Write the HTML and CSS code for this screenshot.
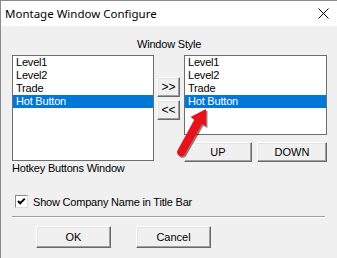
FILE: index.html
```html
<!DOCTYPE html>
<html lang="en">
<head>
    <meta charset="UTF-8">
    <title>Montage Window Configure</title>
    <link rel="stylesheet" href="styles.css">
</head>
<body>
    <div class="window">
        <div class="titlebar">
            <span class="title">Montage Window Configure</span>
            <svg class="close" width="11" height="11" viewBox="0 0 11 11"><path d="M0.5 0.5L10.5 10.5M10.5 0.5L0.5 10.5" stroke="#000" stroke-width="1" fill="none"/></svg>
        </div>
        <div class="content">
            <div class="style-label">Window Style</div>
            <div class="lists">
                <div class="left-col">
                    <ul class="listbox tall">
                        <li>Level1</li>
                        <li>Level2</li>
                        <li>Trade</li>
                        <li class="sel">Hot Button</li>
                    </ul>
                    <div class="caption">Hotkey Buttons Window</div>
                </div>
                <div class="move-col">
                    <button class="btn arrow">&gt;&gt;</button>
                    <button class="btn arrow">&lt;&lt;</button>
                </div>
                <div class="right-col">
                    <ul class="listbox short">
                        <li>Level1</li>
                        <li>Level2</li>
                        <li>Trade</li>
                        <li class="sel">Hot Button</li>
                    </ul>
                    <div class="order">
                        <button class="btn up">UP</button>
                        <button class="btn down">DOWN</button>
                    </div>
                </div>
            </div>
            <div class="check-row">
                <span class="checkbox"><svg width="11" height="11" viewBox="0 0 11 11"><path d="M2 5L4.2 7.3L8.8 2.6" stroke="#000" stroke-width="2" fill="none"/></svg></span>
                <span>Show Company Name in Title Bar</span>
            </div>
            <div class="separator"></div>
            <div class="actions">
                <button class="btn action">OK</button>
                <button class="btn action">Cancel</button>
            </div>
        </div>
        <svg class="pointer" width="45" height="60" viewBox="0 0 45 60">
            <path d="M37.5 10.5L37.4 28L33.5 25.6L15.8 56.3C14.7 58 12 58 10.5 57.2C8.5 56 8 53.6 9 52L25.9 21L22 18.6Z" fill="#5a0000" opacity="0.55"/>
            <path d="M36 9L35.9 26.5L32 24.1L14.3 54.8C13.2 56.5 10.5 56.5 9 55.7C7 54.5 6.5 52.1 7.5 50.5L24.4 19.5L20.5 17.1Z" fill="#e8121c"/>
        </svg>
    </div>
</body>
</html>
```

FILE: styles.css
```css
* {
    box-sizing: border-box;
}
body {
    margin: 0;
    font-family: "Liberation Sans", Arial, sans-serif;
    font-size: 11px;
    letter-spacing: -0.2px;
    color: #000;
}
.window {
    position: relative;
    width: 337px;
    height: 258px;
    overflow: hidden;
    background: #f0f0f0;
    border-left: 1px solid #8c8c8c;
    border-top: 1px solid #8c8c8c;
}
.titlebar {
    height: 25px;
    background: #fff;
    display: flex;
    align-items: center;
    justify-content: space-between;
    padding: 0 8px 0 4px;
}
.title {
    font-family: "Noto Sans", "Open Sans", sans-serif;
    font-size: 11.5px;
    letter-spacing: 0;
    color: #000;
}
.close {
    display: block;
}
.content {
    padding: 12px 0 0 11px;
}
.style-label {
    line-height: 13px;
    padding-left: 125px;
}
.lists {
    display: flex;
    margin-top: 4px;
}
.left-col {
    width: 142px;
}
.move-col {
    width: 23px;
    margin-left: 3px;
    padding-top: 22px;
    display: flex;
    flex-direction: column;
    gap: 3px;
}
.right-col {
    width: 143px;
    margin-left: 4px;
}
.listbox {
    list-style: none;
    margin: 0;
    padding: 0;
    background: #fff;
    border: 1px solid #6e6e6e;
}
.listbox li {
    line-height: 13px;
    height: 13px;
    padding-left: 3px;
    white-space: nowrap;
}
.listbox .sel {
    background: #0078d7;
    color: #fff;
}
.tall {
    height: 106px;
}
.short {
    height: 80px;
}
.caption {
    line-height: 13px;
    margin-top: 1px;
}
.btn {
    font-family: "Liberation Sans", Arial, sans-serif;
    font-size: 11px;
    color: #000;
    background: #f0f0f0;
    padding: 0;
    border: 1px solid;
    border-color: #fff #696969 #696969 #fff;
    box-shadow: inset -1px -1px #a0a0a0, inset 1px 1px #e3e3e3;
    border-radius: 0;
}
.arrow {
    width: 23px;
    height: 20px;
    font-size: 12px;
}
.order {
    display: flex;
    gap: 5px;
    margin-top: 7px;
}
.up {
    width: 68px;
    height: 20px;
}
.down {
    width: 70px;
    height: 20px;
}
.check-row {
    display: flex;
    align-items: center;
    gap: 5px;
    height: 13px;
    margin: 20px 0 0 3px;
}
.checkbox {
    width: 13px;
    height: 13px;
    background: #fff;
    border: 1px solid;
    border-color: #8a8a8a #dcdcdc #dcdcdc #8a8a8a;
}
.checkbox svg {
    display: block;
}
.separator {
    width: 313px;
    height: 2px;
    margin-top: 8px;
    border-top: 1px solid #a0a0a0;
    border-bottom: 1px solid #fff;
}
.actions {
    display: flex;
    gap: 25px;
    margin-top: 8px;
    padding-left: 24px;
}
.action {
    width: 75px;
    height: 22px;
}
.pointer {
    position: absolute;
    left: 169px;
    top: 99px;
}
```
